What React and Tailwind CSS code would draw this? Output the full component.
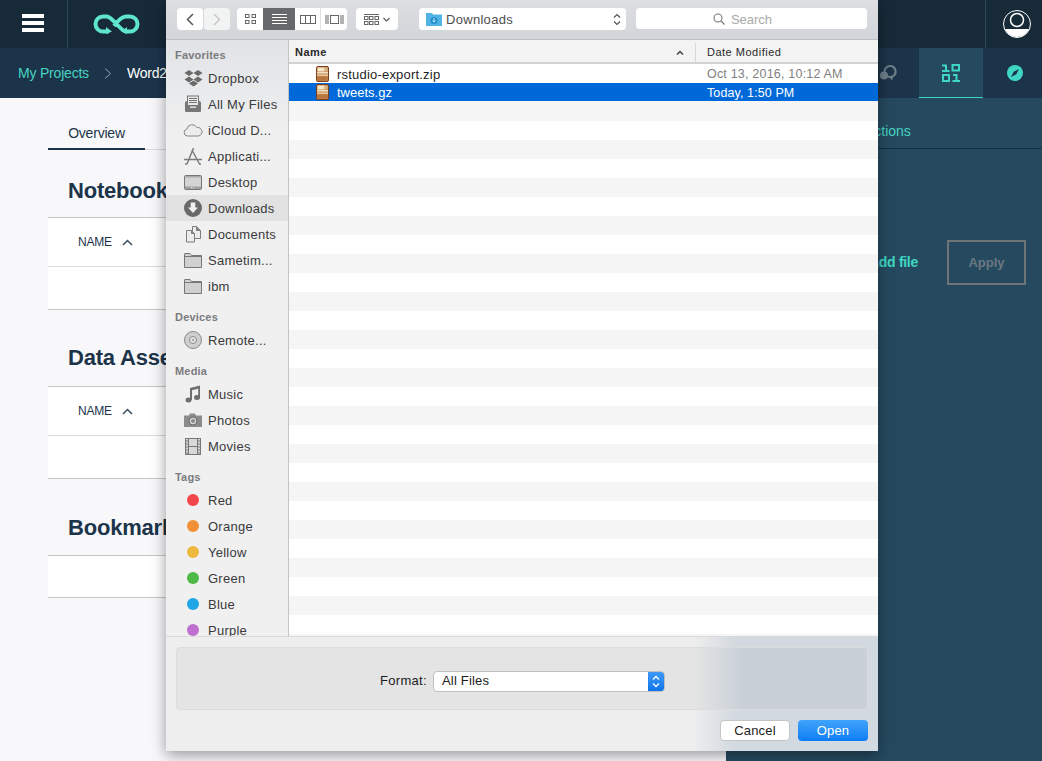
import React from 'react';

const ui = { fontFamily: '"Liberation Sans", Arial, sans-serif' };

function Hamburger() {
  return (
    <div className="flex flex-col gap-[3px] w-[22px] mr-[2px] mb-[2px]">
      <div className="h-1 bg-white" />
      <div className="h-1 bg-white" />
      <div className="h-1 bg-white" />
    </div>
  );
}

function Logo() {
  return (
    <svg width="47" height="20" viewBox="0 0 47 20" fill="none" stroke="#5ee5cc" strokeWidth="4">
      <path d="M16 17.500H10A7.500 7.500 0 0 1 10 2.500H14C19 2.500 28 17.500 33 17.500H37A7.500 7.500 0 0 0 37 2.500H33C28 2.500 24 8 21 12" />
      <path d="M13 13l6 4.500-6 2.500zM34 13l-6 4.500 6 2.500z" fill="#5ee5cc" stroke="none" />
    </svg>
  );
}

function Avatar() {
  return (
    <svg width="30" height="30" viewBox="0 0 30 30" fill="none">
      <defs>
        <clipPath id="av"><circle cx="15" cy="15" r="13" /></clipPath>
      </defs>
      <circle cx="15" cy="15" r="13.500" stroke="#fff" strokeWidth="1" />
      <circle cx="15" cy="11" r="6.500" stroke="#fff" strokeWidth="1.500" />
      <rect x="3" y="20" width="24" height="10" fill="#fff" clipPath="url(#av)" />
    </svg>
  );
}

function BinaryIcon() {
  return (
    <svg width="18" height="18" viewBox="0 0 18 18" fill="none" stroke="#3fd6c3" strokeWidth="2">
      <path d="M0 1.500h4v6M0 7h7.500M10.500 1h6.500v5.500h-6.500zM1 11h6v6H1zM11 11h3.500v6M10.500 17H18" />
    </svg>
  );
}

function CompassIcon() {
  return (
    <svg width="16" height="16" viewBox="0 0 16 16">
      <circle cx="8" cy="8" r="8" fill="#3fd6c3" />
      <path d="M12 4L9.300 9.300 4 12 6.700 6.700z" fill="#1c344a" />
    </svg>
  );
}

function ChatIcon() {
  return (
    <svg width="17" height="17" viewBox="0 0 17 17" fill="#6f7f8a">
      <circle cx="4" cy="10.500" r="4" />
      <path d="M10 0a6.500 6.500 0 0 1 3 12.300L12 15.500 10 13A6.500 6.500 0 0 1 10 0zm0 2a4.500 4.500 0 0 0 0 9 4.500 4.500 0 0 0 0-9z" fillRule="evenodd" />
    </svg>
  );
}

function Section({ title, rows, titleClass }) {
  return (
    <div>
      <h2 className={`pl-5 text-[22px] leading-[30px] tracking-[-0.2px] font-bold text-[#1c344a] whitespace-nowrap ${titleClass}`}>{title}</h2>
      <div className="bg-white border-t border-b border-[#c6c6c9]">
        {rows && (
          <div className="h-[49px] pl-[30px] flex items-center gap-[10px] border-b border-[#dcdcdf] text-[12px] tracking-[-0.2px] text-[#1c344a]">
            NAME
            <svg width="11" height="7" viewBox="0 0 11 7" fill="none" stroke="#3c4e5e" strokeWidth="1.500">
              <path d="M1 6l4.500-4.500L10 6" />
            </svg>
          </div>
        )}
        <div className={rows ? 'h-[42px]' : 'h-[41px]'} />
      </div>
    </div>
  );
}

function Dropbox() {
  return (
    <svg width="19" height="18" viewBox="0 0 19 18" fill="#6a6a6a">
      <path d="M5 1l4.500 3L5 7 .5 4zM14 1l4.500 3L14 7 9.500 4zM5 7.500l4.500 3-4.500 3-4.500-3zM14 7.500l4.500 3-4.500 3-4.500-3zM5 14.500l4.500-3 4.500 3-4.500 3z" />
    </svg>
  );
}

function Files() {
  return (
    <svg width="18" height="18" viewBox="0 0 18 18">
      <rect x="1" y="6" width="16" height="11" rx="2" fill="#777" />
      <rect x="3.500" y="1" width="11" height="11" fill="#e8e8e8" stroke="#777" />
      <path d="M5 3.500h8M5 5.500h8M5 7.500h8" stroke="#777" />
      <rect x="1" y="10" width="16" height="7" rx="1.500" fill="#777" />
      <rect x="6" y="11.500" width="6" height="1.500" fill="#ddd" />
    </svg>
  );
}

function Cloud() {
  return (
    <svg width="20" height="14" viewBox="0 0 20 14" fill="#ececec" stroke="#858585">
      <path d="M4.500 13A3.500 3.500 0 0 1 3.800 6.100 5.500 5.500 0 0 1 14 4.500 4.300 4.300 0 0 1 15.500 13z" />
    </svg>
  );
}

function Apps() {
  return (
    <svg width="20" height="18" viewBox="0 0 20 18" fill="none" stroke="#7d7d7d" strokeWidth="1.500">
      <path d="M10.500 1L4 17M9 3l7.500 14M1 12.500h18M4 17H2M18 17h-2" />
    </svg>
  );
}

function Desktop() {
  return (
    <svg width="18" height="15" viewBox="0 0 18 15">
      <rect x=".5" y=".5" width="17" height="14" rx="1" fill="#d4d4d4" stroke="#777" />
      <rect x="1" y="1" width="16" height="1.500" fill="#aaa" />
      <rect x="1" y="11.500" width="16" height="2.500" fill="#a0a0a0" />
      <path d="M7 12.700h4" stroke="#eee" strokeDasharray="1 1" />
    </svg>
  );
}

function DownloadCircle() {
  return (
    <svg width="18" height="18" viewBox="0 0 18 18">
      <circle cx="9" cy="9" r="9" fill="#696969" />
      <path d="M6.700 3.500h4.600v5H14L9 14 4 8.500h2.700z" fill="#f0f0f0" />
    </svg>
  );
}

function Documents() {
  return (
    <svg width="17" height="18" viewBox="0 0 17 18" fill="#ececec" stroke="#7c7c7c">
      <path d="M7.500 1.500h4l4 4v8h-8z" />
      <path d="M1.500 5.500h5l3 3v8.500h-8z" />
      <path d="M11.500 1.500v4h4M6.500 5.500v3h3" fill="#8a8a8a" />
    </svg>
  );
}

function Folder() {
  return (
    <svg width="18" height="15" viewBox="0 0 18 15" fill="#d0d0d0" stroke="#777">
      <path d="M.5 14.500V1a.5.5 0 0 1 .5-.5h5l1.500 2h10v12z" />
      <path d="M.5 3.500h17" />
    </svg>
  );
}

function Disc() {
  return (
    <svg width="18" height="18" viewBox="0 0 18 18">
      <circle cx="9" cy="9" r="8.500" fill="#cfcfcf" stroke="#8a8a8a" />
      <circle cx="9" cy="9" r="3.500" fill="#e6e6e6" stroke="#8a8a8a" />
      <circle cx="9" cy="9" r="1.300" fill="#aaa" />
    </svg>
  );
}

function Music() {
  return (
    <svg width="16" height="18" viewBox="0 0 16 18" fill="#6e6e6e">
      <path d="M5 3l10-2.500v2.800L7 5.300V15H5z" />
      <path d="M13.200 1.500H15V12.500h-1.800z" />
      <ellipse cx="3.500" cy="15" rx="3" ry="2.500" />
      <ellipse cx="12" cy="12.500" rx="3" ry="2.500" />
    </svg>
  );
}

function Camera() {
  return (
    <svg width="18" height="14" viewBox="0 0 18 14">
      <path d="M0 2.500h5l1-2h5l1 2h6V14H0z" fill="#8b8b8b" />
      <circle cx="9" cy="8" r="4" fill="#d6d6d6" stroke="#666" />
      <circle cx="9" cy="8" r="2" fill="#8b8b8b" />
    </svg>
  );
}

function Film() {
  return (
    <svg width="16" height="17" viewBox="0 0 16 17">
      <rect x=".5" y=".5" width="15" height="16" fill="#d8d8d8" stroke="#777" />
      <path d="M3.500 0v17M12.500 0v17M3.500 8.500h9M0 3h3M0 6h3M0 9h3M0 12h3M0 15h3M13 3h3M13 6h3M13 9h3M13 12h3M13 15h3" stroke="#777" />
    </svg>
  );
}

function Tag({ color }) {
  return <div className="w-3 h-3 rounded-full" style={{ backgroundColor: color }} />;
}

const sidebar = [
  { title: 'Favorites', items: [
    ['Dropbox', <Dropbox />],
    ['All My Files', <Files />],
    ['iCloud D...', <Cloud />],
    ['Applicati...', <Apps />],
    ['Desktop', <Desktop />],
    ['Downloads', <DownloadCircle />, true],
    ['Documents', <Documents />],
    ['Sametim...', <Folder />],
    ['ibm', <Folder />],
  ] },
  { title: 'Devices', items: [['Remote...', <Disc />]] },
  { title: 'Media', items: [
    ['Music', <Music />],
    ['Photos', <Camera />],
    ['Movies', <Film />],
  ] },
  { title: 'Tags', items: [
    ['Red', <Tag color="#f4474b" />],
    ['Orange', <Tag color="#f19037" />],
    ['Yellow', <Tag color="#eeb93f" />],
    ['Green', <Tag color="#4fb947" />],
    ['Blue', <Tag color="#1fa6e6" />],
    ['Purple', <Tag color="#bf6fd0" />],
  ] },
];

function Sidebar() {
  return (
    <div className="w-[123px] shrink-0 overflow-hidden bg-gradient-to-b from-[#e1e3e6] to-[#f0f0f0] to-[16%] border-r border-[#c4c4c4] pt-[5px]">
      {sidebar.map((group, i) => (
        <div key={group.title} className={i > 0 ? 'mt-2' : ''}>
          <div className="h-5 pl-[9px] flex items-center text-[11px] font-bold text-[#7b7b7e] tracking-[0.2px]">{group.title}</div>
          {group.items.map(([name, icon, active]) => (
            <div key={name} className={`h-[26px] flex items-center ${active ? 'bg-[#e2e2e2]' : ''}`}>
              <div className="w-[42px] pl-[12px] pr-[-3px] shrink-0 flex justify-center">{icon}</div>
              <span className="pt-[2px] text-[13px] text-[#3a3a3c] tracking-[0.25px] whitespace-nowrap">{name}</span>
            </div>
          ))}
        </div>
      ))}
    </div>
  );
}

function ZipIcon() {
  return (
    <svg width="13" height="16" viewBox="0 0 13 16">
      <rect x=".5" y=".5" width="12" height="15" rx="1.500" fill="#c98a4e" stroke="#7a3f1c" />
      <rect x="1.500" y="1.500" width="7" height="4" fill="#f5e6c8" />
      <rect x="8.500" y="1.500" width="3" height="4" fill="#d8b88a" />
      <rect x="1" y="6" width="11" height="1.500" fill="#f0dfc4" />
      <rect x="1" y="8.500" width="11" height="1.500" fill="#e6c79c" />
      <rect x="1.500" y="10.500" width="10" height="4" fill="#b8763e" />
    </svg>
  );
}

const stripes = Array.from({ length: 15 }, (_, i) => i);

function FileList() {
  return (
    <div className="flex-1 min-w-0 flex flex-col bg-white overflow-hidden">
      <div className="h-6 shrink-0 pt-[2px] flex items-center bg-[#f3f3f3] border-b-2 border-[#d2d2d2] text-[11px] text-[#2a2a2a] tracking-[0.5px]">
        <div className="w-[407px] pl-[6px] pr-[11px] flex justify-between items-center border-r border-[#d8d8d8] h-[19px] font-bold">
          Name
          <svg width="8" height="5" viewBox="0 0 8 5" fill="none" stroke="#444" strokeWidth="1.500"><path d="M1 4.500l3-3 3 3" /></svg>
        </div>
        <div className="pl-[11px]">Date Modified</div>
      </div>
      <div className="h-[19px] flex items-center text-[13px] tracking-[0.2px] text-[#1f1f1f]">
        <div className="w-[48px] pl-[27px] shrink-0 flex"><ZipIcon /></div>
        <div className="w-[370px] pt-[2px]">rstudio-export.zip</div>
        <div className="pt-[2px] text-[12.500px] text-[#808080] tracking-[0.2px]">Oct 13, 2016, 10:12 AM</div>
      </div>
      <div className="h-[18px] flex items-center text-[13px] text-white bg-[#0069d9]">
        <div className="w-[48px] pl-[27px] shrink-0 flex"><ZipIcon /></div>
        <div className="w-[370px] pt-[2px] font-medium">tweets.gz</div>
        <div className="pt-[2px] text-[12.500px] tracking-[0.1px]">Today, 1:50 PM</div>
      </div>
      <div className="h-px shrink-0 bg-[#f5f5f5]" />
      {stripes.map(i => (
        <React.Fragment key={i}>
          <div className="h-[19px] shrink-0 bg-[#f5f5f5]" />
          <div className="h-[19px] shrink-0 bg-white" />
        </React.Fragment>
      ))}
    </div>
  );
}

function Toolbar() {
  return (
    <div className="h-10 shrink-0 flex items-start pt-2 bg-gradient-to-b from-[#dcdee1] to-[#d2d5d9] border-b border-[#bdbfc2]">
      <div className="ml-[11px] flex gap-px">
        <div className="w-[26px] h-[22px] bg-white rounded flex items-center justify-center">
          <svg width="8" height="13" viewBox="0 0 8 13" fill="none" stroke="#555" strokeWidth="1.500"><path d="M7 1L1.500 6.500 7 12" /></svg>
        </div>
        <div className="w-[26px] h-[22px] bg-[#f2f3f3] rounded flex items-center justify-center">
          <svg width="8" height="13" viewBox="0 0 8 13" fill="none" stroke="#c8c8c8" strokeWidth="1.500"><path d="M1 1l5.500 5.500L1 12" /></svg>
        </div>
      </div>
      <div className="ml-[7px] flex h-[22px] bg-white rounded overflow-hidden">
        <div className="w-[26px] flex items-center justify-center">
          <svg width="11" height="10" viewBox="0 0 11 10" fill="none" stroke="#666"><rect x=".5" y=".5" width="3.500" height="3" /><rect x="7" y=".5" width="3.500" height="3" /><rect x=".5" y="6.500" width="3.500" height="3" /><rect x="7" y="6.500" width="3.500" height="3" /></svg>
        </div>
        <div className="w-8 bg-[#67696b] flex items-center justify-center">
          <svg width="15" height="10" viewBox="0 0 15 10" stroke="#fff"><path d="M0 .5h15M0 3.500h15M0 6.500h15M0 9.500h15" /></svg>
        </div>
        <div className="w-[26px] flex items-center justify-center border-r border-[#e0e0e0]">
          <svg width="16" height="9" viewBox="0 0 16 9" fill="none" stroke="#666"><rect x=".5" y=".5" width="15" height="8" /><path d="M5.500 0v9M10.500 0v9" /></svg>
        </div>
        <div className="w-[26px] flex items-center justify-center">
          <svg width="19" height="9" viewBox="0 0 19 9" fill="none" stroke="#666"><rect x="5.500" y=".5" width="8" height="8" /><path d="M1 0v9M3 0v9M16 0v9M18 0v9" /></svg>
        </div>
      </div>
      <div className="ml-[9px] w-[42px] h-[22px] bg-white rounded flex items-center justify-center gap-1">
        <svg width="15" height="11" viewBox="0 0 15 11" fill="none" stroke="#666">
          <path d="M0 .5h15" />
          <rect x=".5" y="2.500" width="3.500" height="3" /><rect x="5.500" y="2.500" width="3.500" height="3" /><rect x="11" y="2.500" width="3.500" height="3" />
          <rect x=".5" y="7.500" width="3.500" height="3" /><rect x="5.500" y="7.500" width="3.500" height="3" /><rect x="11" y="7.500" width="3.500" height="3" />
        </svg>
        <svg width="7" height="5" viewBox="0 0 7 5" fill="none" stroke="#666" strokeWidth="1.300"><path d="M.5 1l3 3 3-3" /></svg>
      </div>
      <div className="ml-[21px] w-[207px] h-[22px] bg-white rounded flex items-center pl-[7px] pr-[5px] text-[13px] text-[#4d4d4d] tracking-[0.3px]">
        <svg width="16" height="14" viewBox="0 0 16 14" className="mr-[4px]">
          <path d="M0 1h6l1 1.500h9V14H0z" fill="#52b4e4" />
          <circle cx="8" cy="8.500" r="3.500" fill="#1f8fcb" />
          <path d="M8 6v4M6.500 8.500L8 10.200l1.500-1.700" stroke="#c8ebfa" fill="none" />
        </svg>
        <span className="pt-[2px]">Downloads</span>
        <svg className="ml-auto" width="8" height="13" viewBox="0 0 8 13" fill="none" stroke="#555" strokeWidth="1.200"><path d="M1 4.500L4 1.500l3 3M1 8.500l3 3 3-3" /></svg>
      </div>
      <div className="ml-[10px] w-[231px] h-[21px] bg-white rounded flex items-center justify-center pr-[18px] gap-[6px] text-[13px] text-[#a9a9a9]">
        <svg width="12" height="12" viewBox="0 0 12 12" fill="none" stroke="#777" strokeWidth="1.100"><circle cx="5" cy="5" r="4" /><path d="M8 8l3.500 3.500" /></svg>
        <span className="pt-[2px]">Search</span>
      </div>
    </div>
  );
}

function Footer() {
  return (
    <div className="h-[115px] shrink-0 border-t border-[#dadada] bg-gradient-to-r from-[#eeeeee] from-[74%] to-[#d3d9e0] to-[80%] px-[10px] pt-[10px]">
      <div className="h-[63px] pt-[5px] pl-px rounded-sm border border-[#dcdcdc] bg-gradient-to-r from-[#e4e4e4] from-[75%] to-[#c9d0d8] to-[82%] flex items-center justify-center text-[13px] text-[#1c1c1c]">
        <span className="mr-[6px] tracking-[0.3px]">Format:</span>
        <div className="w-[232px] h-[21px] bg-white rounded border border-[#c0c0c0] flex items-center pl-2 tracking-[0.2px] overflow-hidden">
          All Files
          <div className="ml-auto w-4 h-[21px] bg-gradient-to-b from-[#3f9bf8] to-[#0a72ea] flex items-center justify-center">
            <svg width="8" height="13" viewBox="0 0 8 13" fill="none" stroke="#fff" strokeWidth="1.300"><path d="M1 4.500L4 1.500l3 3M1 8.500l3 3 3-3" /></svg>
          </div>
        </div>
      </div>
      <div className="mt-[10px] flex justify-end gap-2 text-[13px] tracking-[0.2px]">
        <div className="w-[70px] h-[21px] bg-white rounded border border-[#c4c4c4] flex items-center justify-center text-[#1c1c1c]">Cancel</div>
        <div className="w-[70px] h-[21px] rounded bg-gradient-to-b from-[#3fa4fb] to-[#0a7cf5] flex items-center justify-center text-white">Open</div>
      </div>
    </div>
  );
}

function Dialog() {
  return (
    <div className="absolute left-[166px] top-0 w-[712px] h-[751px] flex flex-col shadow-[0_4px_14px_rgba(0,0,0,0.4)]">
      <Toolbar />
      <div className="flex-1 min-h-0 flex">
        <Sidebar />
        <FileList />
      </div>
      <Footer />
    </div>
  );
}

export default function App() {
  return (
    <div className="relative w-[1042px] h-[761px] overflow-hidden bg-[#f8f8fb] flex flex-col" style={ui}>
      {/* Top bar */}
      <div className="h-12 shrink-0 flex items-center bg-[#162a38]">
        <div className="w-[68px] h-full flex items-center justify-center border-r border-[#2c4a5c]">
          <Hamburger />
        </div>
        <div className="ml-[25px]"><Logo /></div>
        <div className="ml-auto w-[57px] h-full border-l border-[#2c4a5c] pl-[16px] flex items-center">
          <Avatar />
        </div>
      </div>

      {/* Breadcrumb bar */}
      <div className="h-[50px] shrink-0 flex items-center bg-[#1c344a] text-[14px]">
        <span className="ml-[18px] text-[#46d3c0] tracking-[-0.2px]">My Projects</span>
        <svg className="ml-[15px]" width="8" height="11" viewBox="0 0 8 11" fill="none" stroke="#8fa3b0" strokeWidth="1"><path d="M1 .5l5.500 5L1 10.500" /></svg>
        <span className="ml-[15px] text-white tracking-[-0.2px]">Word2Vec</span>
        <div className="ml-auto flex h-full">
          <div className="w-[64px] flex items-center justify-center pl-[2px]"><ChatIcon /></div>
          <div className="w-[64px] flex items-center justify-center bg-[#254a60] border-b border-[#3fd6c3]"><BinaryIcon /></div>
          <div className="w-[59px] flex items-center justify-center pl-[4px]"><CompassIcon /></div>
        </div>
      </div>

      <div className="flex-1 min-h-0 flex">
        {/* Project content */}
        <div className="w-[726px] pl-12 pr-4 text-[#1c344a]">
          <div className="h-[52px] flex items-end border-b border-[#d9d9dc]">
            <div className="w-[97px] h-[52px] -mb-px border-b-2 border-[#1c344a] flex items-center justify-center pt-[20px] text-[14px] tracking-[-0.2px]">Overview</div>
          </div>
          <div className="pt-[26px]"><Section title="Notebooks" rows titleClass="h-[41px]" /></div>
          <div className="pt-[33px]"><Section title="Data Assets" rows titleClass="h-[43px]" /></div>
          <div className="pt-[34px]"><Section title="Bookmarks" titleClass="h-[42px]" /></div>
        </div>

        {/* Right panel */}
        <div className="flex-1 bg-[#254a60]">
          <div className="h-[51px] flex items-center border-b border-[#16303f] pl-[107px] pt-[16px] text-[14px] text-[#46d3c0]">Connections</div>
          <div className="mt-[91px] flex items-center">
            <span className="ml-[143px] text-[14px] font-bold text-[#3fd6c3] whitespace-nowrap tracking-[-0.3px]">Add file</span>
            <div className="ml-[29px] w-[79px] h-[45px] border-2 border-[#6e7478] flex items-center justify-center text-[13px] font-bold text-[#6b7780]">Apply</div>
          </div>
        </div>
      </div>

      <Dialog />
    </div>
  );
}
